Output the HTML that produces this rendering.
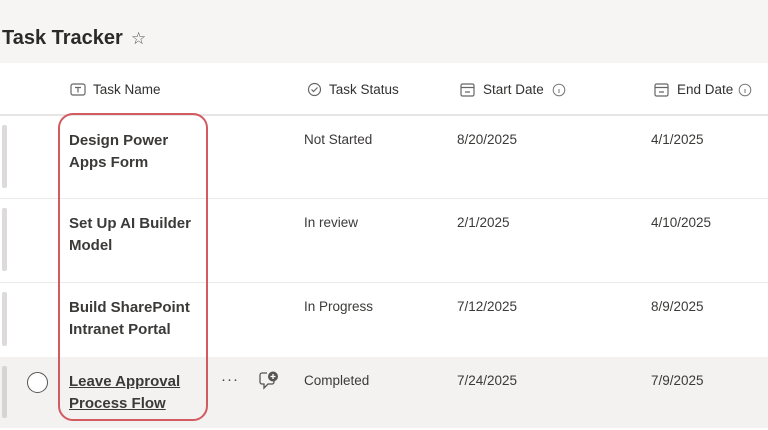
<!DOCTYPE html>
<html><head><style>
*{margin:0;padding:0;box-sizing:border-box}
body{width:768px;height:430px;overflow:hidden;background:#fff;font-family:"Liberation Sans",sans-serif;color:#323130;position:relative}
.a{position:absolute;white-space:nowrap}
.hdr{font-size:13.5px;color:#323130}
.nm{font-size:15px;font-weight:bold;line-height:22px;color:#3b3a39}
.tx{font-size:13.5px;color:#3b3a39}
.bar{position:absolute;left:2px;width:5px;background:#dcdbda;border-radius:2px}
.sep{position:absolute;left:0;width:768px;height:1px;background:#ecebea}
</style></head><body>
<div class="a" style="left:0;top:0;width:768px;height:63px;background:#f6f5f4"></div>
<div class="a" style="left:2px;top:27px;font-size:20px;font-weight:bold;color:#2b2a29">Task Tracker</div>
<div class="a" style="left:131px;top:29px;font-size:17px;color:#555">☆</div>
<div class="sep" style="top:114px;height:2px;background:#e6e5e4"></div>
<svg class="a" style="left:70px;top:83px" width="16" height="13"><rect x="1" y="1" width="14" height="11" rx="2" fill="none" stroke="#666" stroke-width="1.2"/><path d="M5 4.5h6M8 4.5v5" stroke="#666" stroke-width="1.2"/></svg>
<div class="a hdr" style="left:93px;top:82px">Task Name</div>
<svg class="a" style="left:307px;top:82px" width="15" height="15"><circle cx="7.5" cy="7.5" r="6" fill="none" stroke="#666" stroke-width="1.2"/><path d="M4.5 7.5l2 2 4-4" fill="none" stroke="#666" stroke-width="1.2"/></svg>
<div class="a hdr" style="left:329px;top:82px">Task Status</div>
<svg class="a" style="left:460px;top:83px" width="15" height="14"><rect x="1" y="1" width="13" height="12" rx="1.5" fill="none" stroke="#666" stroke-width="1.2"/><path d="M1 4.5h13M5 9h5" stroke="#666" stroke-width="1.2"/></svg>
<div class="a hdr" style="left:483px;top:82px">Start Date</div>
<svg class="a" style="left:552px;top:83px" width="14" height="14"><circle cx="7" cy="7" r="5.8" fill="none" stroke="#777" stroke-width="1"/><path d="M7 6v4" stroke="#777"/></svg>
<svg class="a" style="left:654px;top:83px" width="15" height="14"><rect x="1" y="1" width="13" height="12" rx="1.5" fill="none" stroke="#666" stroke-width="1.2"/><path d="M1 4.5h13M5 9h5" stroke="#666" stroke-width="1.2"/></svg>
<div class="a hdr" style="left:677px;top:82px">End Date</div>
<svg class="a" style="left:738px;top:83px" width="14" height="14"><circle cx="7" cy="7" r="5.8" fill="none" stroke="#777" stroke-width="1"/><path d="M7 6v4" stroke="#777"/></svg>

<div class="bar" style="top:125px;height:63px"></div>
<div class="a nm" style="left:69px;top:130px">Design Power<br>Apps Form</div>
<div class="a tx" style="left:304px;top:132px">Not Started</div>
<div class="a tx" style="left:457px;top:132px">8/20/2025</div>
<div class="a tx" style="left:651px;top:132px">4/1/2025</div>
<div class="sep" style="top:198px"></div>

<div class="bar" style="top:208px;height:63px"></div>
<div class="a nm" style="left:69px;top:213px">Set Up AI Builder<br>Model</div>
<div class="a tx" style="left:304px;top:215px">In review</div>
<div class="a tx" style="left:457px;top:215px">2/1/2025</div>
<div class="a tx" style="left:651px;top:215px">4/10/2025</div>
<div class="sep" style="top:282px"></div>

<div class="bar" style="top:292px;height:54px"></div>
<div class="a nm" style="left:69px;top:297px">Build SharePoint<br>Intranet Portal</div>
<div class="a tx" style="left:304px;top:299px">In Progress</div>
<div class="a tx" style="left:457px;top:299px">7/12/2025</div>
<div class="a tx" style="left:651px;top:299px">8/9/2025</div>

<div class="a" style="left:0;top:357px;width:768px;height:71px;background:#f3f2f1"></div>
<div class="bar" style="top:366px;height:52px;background:#d6d5d4"></div>
<div class="a" style="left:27px;top:372px;width:21px;height:21px;border-radius:50%;border:1.5px solid #555;background:#fff"></div>
<div class="a nm" style="left:69px;top:371px;text-decoration:underline">Leave Approval<br>Process Flow</div>
<div class="a" style="left:221px;top:371px;font-size:15px;color:#444;letter-spacing:1px">···</div>
<svg class="a" style="left:258px;top:370px" width="22" height="22"><path d="M9 3H4a2 2 0 0 0-2 2v7a2 2 0 0 0 2 2h2v4l4-4h4a2 2 0 0 0 2-2v-1" fill="none" stroke="#555" stroke-width="1.3"/><circle cx="15" cy="6.5" r="5" fill="#555"/><path d="M15 4v5M12.5 6.5h5" stroke="#fff" stroke-width="1.3"/></svg>
<div class="a tx" style="left:304px;top:373px">Completed</div>
<div class="a tx" style="left:457px;top:373px">7/24/2025</div>
<div class="a tx" style="left:651px;top:373px">7/9/2025</div>

<div class="a" style="left:58px;top:113px;width:150px;height:308px;border:2px solid #d25a61;border-radius:15px"></div>
</body></html>
